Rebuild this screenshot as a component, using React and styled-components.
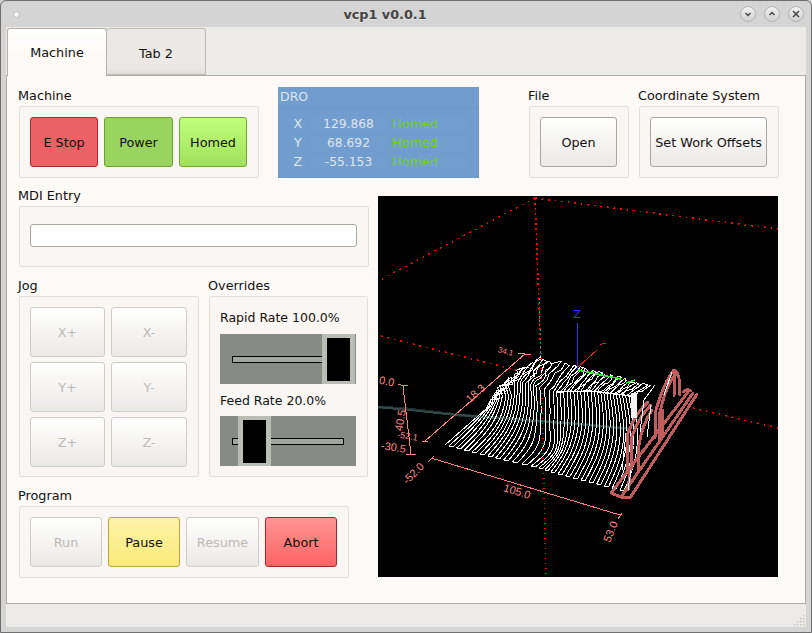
import React from "react";
import styled, { createGlobalStyle, css } from "styled-components";

const Global = createGlobalStyle`
  html, body { margin: 0; padding: 0; background: #d4d4d4; overflow: hidden; }
  * { box-sizing: border-box; }
  body { font-family: "DejaVu Sans", sans-serif; font-size: 12.8px; color: #111; }
`;

const Window = styled.div`
  width: 812px; height: 633px; display: flex; flex-direction: column;
  background: #d4d4d4; border: 1px solid #6f6f6f; border-bottom-width: 1px;
  border-radius: 6px 6px 0 0; padding-bottom: 5px;
`;
const TitleBar = styled.header`
  height: 26px; flex: none; display: flex; align-items: center; padding: 0 7px 0 12px;
`;
const MenuDot = styled.span`
  width: 7px; height: 7px; border-radius: 50%; background: #f4f4f4; border: 1px solid #bbb; flex: none;
`;
const Title = styled.h1`
  flex: 1; margin: 0 0 0 10px; text-align: center; font-size: 12.8px; font-weight: bold; color: #444;
  text-shadow: 0 1px 0 #e6e6e6;
`;
const WinButtons = styled.div`display: flex; gap: 8px;`;
const WinButton = styled.span`
  width: 16px; height: 16px; border-radius: 50%; display: grid; place-items: center;
  background: linear-gradient(#f2f2f2, #d0d0d0); border: 1px solid #b4b4b4; color: #444;
`;
const Body = styled.div`
  flex: 1; min-height: 0; margin: 0 5px; background: #edebe7; display: flex; flex-direction: column;
`;
const Tabs = styled.nav`
  height: 48px; flex: none; display: flex; align-items: flex-end; padding-left: 1px; position: relative; z-index: 1;
`;
const Tab = styled.div`
  display: flex; align-items: center; justify-content: center; border: 1px solid #b3afab; border-radius: 3px 3px 0 0;
  ${(p) => p.$active ? css`
    width: 100px; height: 48px; margin-bottom: -1px; border-bottom: none;
    background: linear-gradient(#ffffff, #fdf9f6 55%);
    padding-bottom: 1px;
  ` : css`
    width: 99px; height: 47px; border-left: none;
    background: linear-gradient(#ebe8e5 85%, #e2dfdb);
    border-color: #bdb9b5;
    padding-top: 4px;
  `}
`;
const Panel = styled.main`
  height: 529px; flex: none; background: #fdf9f6; border: 1px solid #aeaaa6; padding: 11px 0 0 12px;
  display: flex; flex-direction: column; gap: 9px;
`;
const TopRow = styled.section`display: flex; align-items: flex-start;`;
const Field = styled.div`
  display: flex; flex-direction: column;
  margin-left: ${(p) => p.$ml || 0}px;
`;
const Label = styled.div`
  height: 19px; line-height: 17px; margin-left: -1px; white-space: nowrap;
`;
const Group = styled.div`
  background: #faf6f3; border: 1px solid #e3dfda; border-radius: 2px;
  width: ${(p) => p.$w}px; height: ${(p) => p.$h}px; padding: 10px;
`;
const ButtonRow = styled.div`display: flex; gap: 6px;`;
const Btn = styled.button`
  width: ${(p) => p.$w}px; height: 50px; padding: 0; font: inherit; color: #111;
  border-radius: 3px; border: 1px solid #a9a5a1;
  background: linear-gradient(#ffffff, #ebe9e6);
  ${(p) => p.disabled && css`color: #bcb9b5; border-color: #cfcbc7;`}
  ${(p) => p.$tone === "estop" && css`background: #eb6166; border-color: #b2282c;`}
  ${(p) => p.$tone === "power" && css`background: #99d55e; border-color: #6da032;`}
  ${(p) => p.$tone === "homed" && css`background: linear-gradient(#c0ff7c, #a0e05c); border-color: #70a832;`}
  ${(p) => p.$tone === "pause" && css`background: linear-gradient(#fdf3a8, #fbe97a); border-color: #b9a63a;`}
  ${(p) => p.$tone === "abort" && css`background: linear-gradient(#ff9494, #ff6464); border-color: #a9262b;`}
`;
const Dro = styled.div`
  width: 201px; height: 91px; margin-left: 19px; background: #709cce; color: #dfe6ee;
  display: flex; flex-direction: column;
`;
const DroTitle = styled.div`height: 20px; line-height: 19px; padding-left: 2px; flex: none; font-size: 12.5px;`;
const DroFrame = styled.div`
  flex: 1; border: 1px solid #6a95c6; padding: 9px 11px 0 12px; display: flex; flex-direction: column; gap: 5px;
`;
const DroRow = styled.div`
  height: 14px; display: grid; grid-template-columns: 14px 75px 75px; column-gap: 6px; align-items: center; line-height: 14px;
`;
const DroAxis = styled.span`background: #729dcf; text-align: center;`;
const DroValue = styled.span`background: #729dcf; text-align: center; font-size: 12.3px;`;
const DroState = styled.span`background: #729dcf; color: #73d216; height: 14px;`;
const MainRow = styled.section`display: flex; align-items: flex-start; gap: 9px;`;
const LeftCol = styled.div`width: 350px; display: flex; flex-direction: column; gap: 10px;`;
const MdiGroup = styled(Group)`display: flex; align-items: center; padding: 0 10px 2px;`;
const MdiInput = styled.input`
  width: 327px; height: 23px; border: 1px solid #a9a5a1; border-radius: 3px; background: #fff; padding: 0 4px;
`;
const Pair = styled.div`display: flex; gap: 10px;`;
const JogGrid = styled.div`
  display: grid; grid-template-columns: 75px 76px; gap: 5px 6px;
`;
const OverrideBody = styled(Group)`display: flex; flex-direction: column;`;
const RateLabel = styled.div`
  height: 17px; line-height: 17px; font-size: 12.5px; white-space: nowrap;
  margin-top: ${(p) => p.$mt}px; margin-bottom: ${(p) => p.$mb}px;
`;
const Slider = styled.div`
  width: 136px; height: 50px; background: #888a85; position: relative; flex: none;
`;
const Groove = styled.div`
  position: absolute; left: 12px; top: 22px; width: 112px; height: 7px; background: #a3a69f; border: 1px solid #000;
`;
const Handle = styled.div`
  position: absolute; left: ${(p) => p.$x}px; top: 0; width: 33px; height: 50px; background: #babdb6;
  display: flex; align-items: center; justify-content: center;
  &::after { content: ""; width: 23px; height: 43px; background: #000; }
`;
const Viewer = styled.svg`
  display: block; width: 400px; height: 381px; margin-top: 9px; background: #000; flex: none;
`;
const StatusBar = styled.footer`
  flex: 1; display: flex; align-items: flex-end; justify-content: flex-end; padding: 0 1px 1px 0; margin-top: 1px;
`;

const lerp = (a, b, t) => a + (b - a) * t;
const table = (rows, u) => {
  for (let i = 1; i < rows.length; i++) {
    if (u <= rows[i][0]) {
      const t = (u - rows[i - 1][0]) / (rows[i][0] - rows[i - 1][0]);
      return [lerp(rows[i - 1][1], rows[i][1], t), lerp(rows[i - 1][2], rows[i][2], t)];
    }
  }
  const l = rows[rows.length - 1];
  return [l[1], l[2]];
};
const RIDGE = [[0, 494, 402], [.12, 503, 386], [.26, 520, 382], [.4, 537, 386], [.47, 552, 392], [.75, 596, 391], [1, 632, 397]];
const BACK = [[0, 498, 396], [.12, 512, 378], [.26, 538, 358], [.4, 556, 363], [.47, 572, 366], [.75, 612, 376], [1, 650, 386]];
const noise = (i, j) => {
  const s = Math.sin(i * 12.9898 + j * 78.233) * 43758.5453;
  return s - Math.floor(s) - .5;
};
const buildSurface = () => {
  const N = 46;
  const parts = [];
  for (let i = 0; i <= N; i++) {
    const u = i / N;
    const F = [lerp(445, 624, u), lerp(445, 491, u)];
    const R = table(RIDGE, u);
    const B = table(BACK, u);
    const pts = [];
    for (let k = 0; k <= 14; k++) {
      const t = k / 14;
      const bulge = 9 * Math.sin(Math.PI * t) * (u > .15 ? 1 : u / .15);
      const hump = 10 * Math.exp(-Math.pow((u - .47) / .09, 2)) * Math.exp(-Math.pow((t - .22) / .26, 2));
      const shoulder = t > .85 && u < .2 ? (t - .85) * 30 : 0;
      pts.push([lerp(F[0], R[0], t) + bulge + hump - shoulder, lerp(F[1], R[1], t) + bulge * .25]);
    }
    const amp = u < .42 ? 6 : 3;
    for (let k = 1; k <= 5; k++) {
      const t = k / 5;
      pts.push([lerp(R[0], B[0], t) + noise(i, k) * amp, lerp(R[1], B[1], t) + noise(k, i) * amp]);
    }
    parts.push(i % 2 === 0 ? pts : pts.reverse());
  }
  let d = "";
  parts.forEach((pts) => {
    pts.forEach((p) => {
      d += `${d ? "L" : "M"}${p[0].toFixed(1)} ${p[1].toFixed(1)}`;
    });
  });
  return d;
};
const surface = buildSurface();
const Tick = ({ d }) => <path d={d} stroke="#ff8080" fill="none" />;
const Dim = ({ x, y, r, children, size = 11 }) => (
  <text x={x} y={y} fontSize={size} fill="#ff8a8a" textAnchor="middle" fontFamily="'Liberation Sans', sans-serif"
    transform={`rotate(${r} ${x} ${y})`}>{children}</text>
);

const Scene = () => (
  <Viewer viewBox="378 196 400 381">
    <g fill="none" shapeRendering="crispEdges">
      <path d="M378 407L408 409L458 415L578 424L631 429" stroke="#1b2b2b" strokeWidth="3" />
      <g stroke="#f00" strokeDasharray="1.6 5" strokeWidth="1.6">
        <path d="M535 198L378 281" />
        <path d="M535 198L778 229" />
        <path d="M381 336L524 372" />
        <path d="M693 408L778 428" />
      </g>
      <path d="M539 298L541 356" stroke="#3b9a9a" strokeDasharray="2 2.4" />
      <path d="M577 323V369" stroke="#3434e0" />
      <path d="M578 367L597 350M600 344.5L606 343" stroke="#e82020" />
      <Tick d="M425 441L525 354M518 353.5L531 354.5M422 441L428 442" />
      <Tick d="M403 386L411 454M398 384.5L408 386M406 454L416 455" />
      <Tick d="M431 458L620 515M428 462L434 456M618 519L622 513" />
      <path d={surface} stroke="#fff" strokeWidth="1" strokeLinejoin="round" />
      <path d="M557 392L590 391L632 396" stroke="#fff" strokeWidth="1.4" />
      <path d="M378 407L458 415L578 424L631 429" stroke="#7ea0a0" strokeWidth="2" opacity=".25" />
      <path d="M578 370L621 379M626 383L635 380" stroke="#33ee33" strokeWidth="1.6" />
      <g stroke="#c25c5c" strokeWidth="3" strokeLinecap="round">
        <path d="M611 493L688 392M621 497L693 393M630 498L697 394" />
        <path d="M611 493L621 497M630 498L621 497" />
        <path d="M627 470L628 433Q636 412 648 402" />
        <path d="M631 470L632 436Q640 415 651 405" />
        <path d="M638 470L639 445Q642 425 652 410" />
        <path d="M628 490L630 472" />
        <path d="M655 438L656 410Q664 382 674 370Q680 370 680 395" />
        <path d="M659 440L660 412Q666 385 676 374" />
        <path d="M662 438L663 410" />
        <path d="M674 396L675 372" />
        <path d="M683 392Q687 388 691 391" />
      </g>
      <rect x="631" y="393" width="6" height="25" fill="#f4f4f4" />
      <path d="M628 490L631 470M626 433L622 470" stroke="#fff" strokeWidth="1" />
      <path d="M640 432L644 400L655 385M647 437L651 405M664 395L672 372" stroke="#fff" strokeWidth="1" />
      <path d="M535 198L541 358L546 577" stroke="#f00" strokeDasharray="1.6 3.4" strokeWidth="1.6" />
    </g>
    <text x="577" y="318" fontSize="11" fill="#3838ff" textAnchor="middle" fontFamily="'DejaVu Sans', sans-serif">Z</text>
    <Dim x={386} y={385} r={12}>0.0</Dim>
    <Dim x={404} y={421} r={-80}>40.5</Dim>
    <Dim x={393} y={451} r={8}>-30.5</Dim>
    <Dim x={407} y={439} r={10} size={9}>-52.1</Dim>
    <Dim x={478} y={396} r={-42}>18.3</Dim>
    <Dim x={505} y={354} r={15} size={8}>34.1</Dim>
    <Dim x={416} y={476} r={-45}>-52.0</Dim>
    <Dim x={516} y={495} r={17}>105.0</Dim>
    <Dim x={614} y={533} r={-68}>53.0</Dim>
  </Viewer>
);

const Glyph = ({ d }) => (
  <svg width="10" height="10" viewBox="0 0 10 10" fill="none" stroke="currentColor" strokeWidth="1.5"><path d={d} /></svg>
);
const Grip = () => (
  <svg width="11" height="11" viewBox="0 0 11 11" fill="#c4c0bb">
    {[[9, 0], [6, 3], [9, 3], [3, 6], [6, 6], [9, 6], [0, 9], [3, 9], [6, 9], [9, 9]].map(([x, y]) => (
      <rect key={`${x}-${y}`} x={x} y={y} width="1.4" height="1.4" />
    ))}
  </svg>
);
const axes = [["X", "129.868"], ["Y", "68.692"], ["Z", "-55.153"]];
const jog = ["X+", "X-", "Y+", "Y-", "Z+", "Z-"];

export default function App() {
  return (
    <>
      <Global />
      <Window>
        <TitleBar>
          <MenuDot />
          <Title>vcp1 v0.0.1</Title>
          <WinButtons>
            <WinButton><Glyph d="M2.5 4L5 6.5L7.5 4" /></WinButton>
            <WinButton><Glyph d="M2.5 6L5 3.5L7.5 6" /></WinButton>
            <WinButton><Glyph d="M2 2L8 8M8 2L2 8" /></WinButton>
          </WinButtons>
        </TitleBar>
        <Body>
          <Tabs>
            <Tab $active>Machine</Tab>
            <Tab>Tab 2</Tab>
          </Tabs>
          <Panel>
            <TopRow>
              <Field>
                <Label>Machine</Label>
                <Group $w={240} $h={72}>
                  <ButtonRow>
                    <Btn $w={68} $tone="estop">E Stop</Btn>
                    <Btn $w={69} $tone="power">Power</Btn>
                    <Btn $w={68} $tone="homed">Homed</Btn>
                  </ButtonRow>
                </Group>
              </Field>
              <Dro>
                <DroTitle>DRO</DroTitle>
                <DroFrame>
                  {axes.map(([a, v]) => (
                    <DroRow key={a}>
                      <DroAxis>{a}</DroAxis>
                      <DroValue>{v}</DroValue>
                      <DroState>Homed</DroState>
                    </DroRow>
                  ))}
                </DroFrame>
              </Dro>
              <Field $ml={50}>
                <Label>File</Label>
                <Group $w={100} $h={72}>
                  <Btn $w={77}>Open</Btn>
                </Group>
              </Field>
              <Field $ml={10}>
                <Label>Coordinate System</Label>
                <Group $w={140} $h={72}>
                  <Btn $w={117}>Set Work Offsets</Btn>
                </Group>
              </Field>
            </TopRow>
            <MainRow>
              <LeftCol>
                <Field>
                  <Label>MDI Entry</Label>
                  <MdiGroup $w={350} $h={61}>
                    <MdiInput />
                  </MdiGroup>
                </Field>
                <Pair>
                  <Field>
                    <Label>Jog</Label>
                    <Group $w={180} $h={181}>
                      <JogGrid>
                        {jog.map((j, i) => <Btn key={j} $w={i % 2 ? 76 : 75} disabled>{j}</Btn>)}
                      </JogGrid>
                    </Group>
                  </Field>
                  <Field>
                    <Label>Overrides</Label>
                    <OverrideBody $w={159} $h={181}>
                      <RateLabel $mt={2} $mb={8}>Rapid Rate 100.0%</RateLabel>
                      <Slider><Groove /><Handle $x={102} /></Slider>
                      <RateLabel $mt={8} $mb={7}>Feed Rate 20.0%</RateLabel>
                      <Slider><Groove /><Handle $x={18} /></Slider>
                    </OverrideBody>
                  </Field>
                </Pair>
                <Field>
                  <Label>Program</Label>
                  <Group $w={330} $h={72}>
                    <ButtonRow>
                      <Btn $w={72} disabled>Run</Btn>
                      <Btn $w={72} $tone="pause">Pause</Btn>
                      <Btn $w={73} disabled>Resume</Btn>
                      <Btn $w={72} $tone="abort">Abort</Btn>
                    </ButtonRow>
                  </Group>
                </Field>
              </LeftCol>
              <Scene />
            </MainRow>
          </Panel>
          <StatusBar><Grip /></StatusBar>
        </Body>
      </Window>
    </>
  );
}
